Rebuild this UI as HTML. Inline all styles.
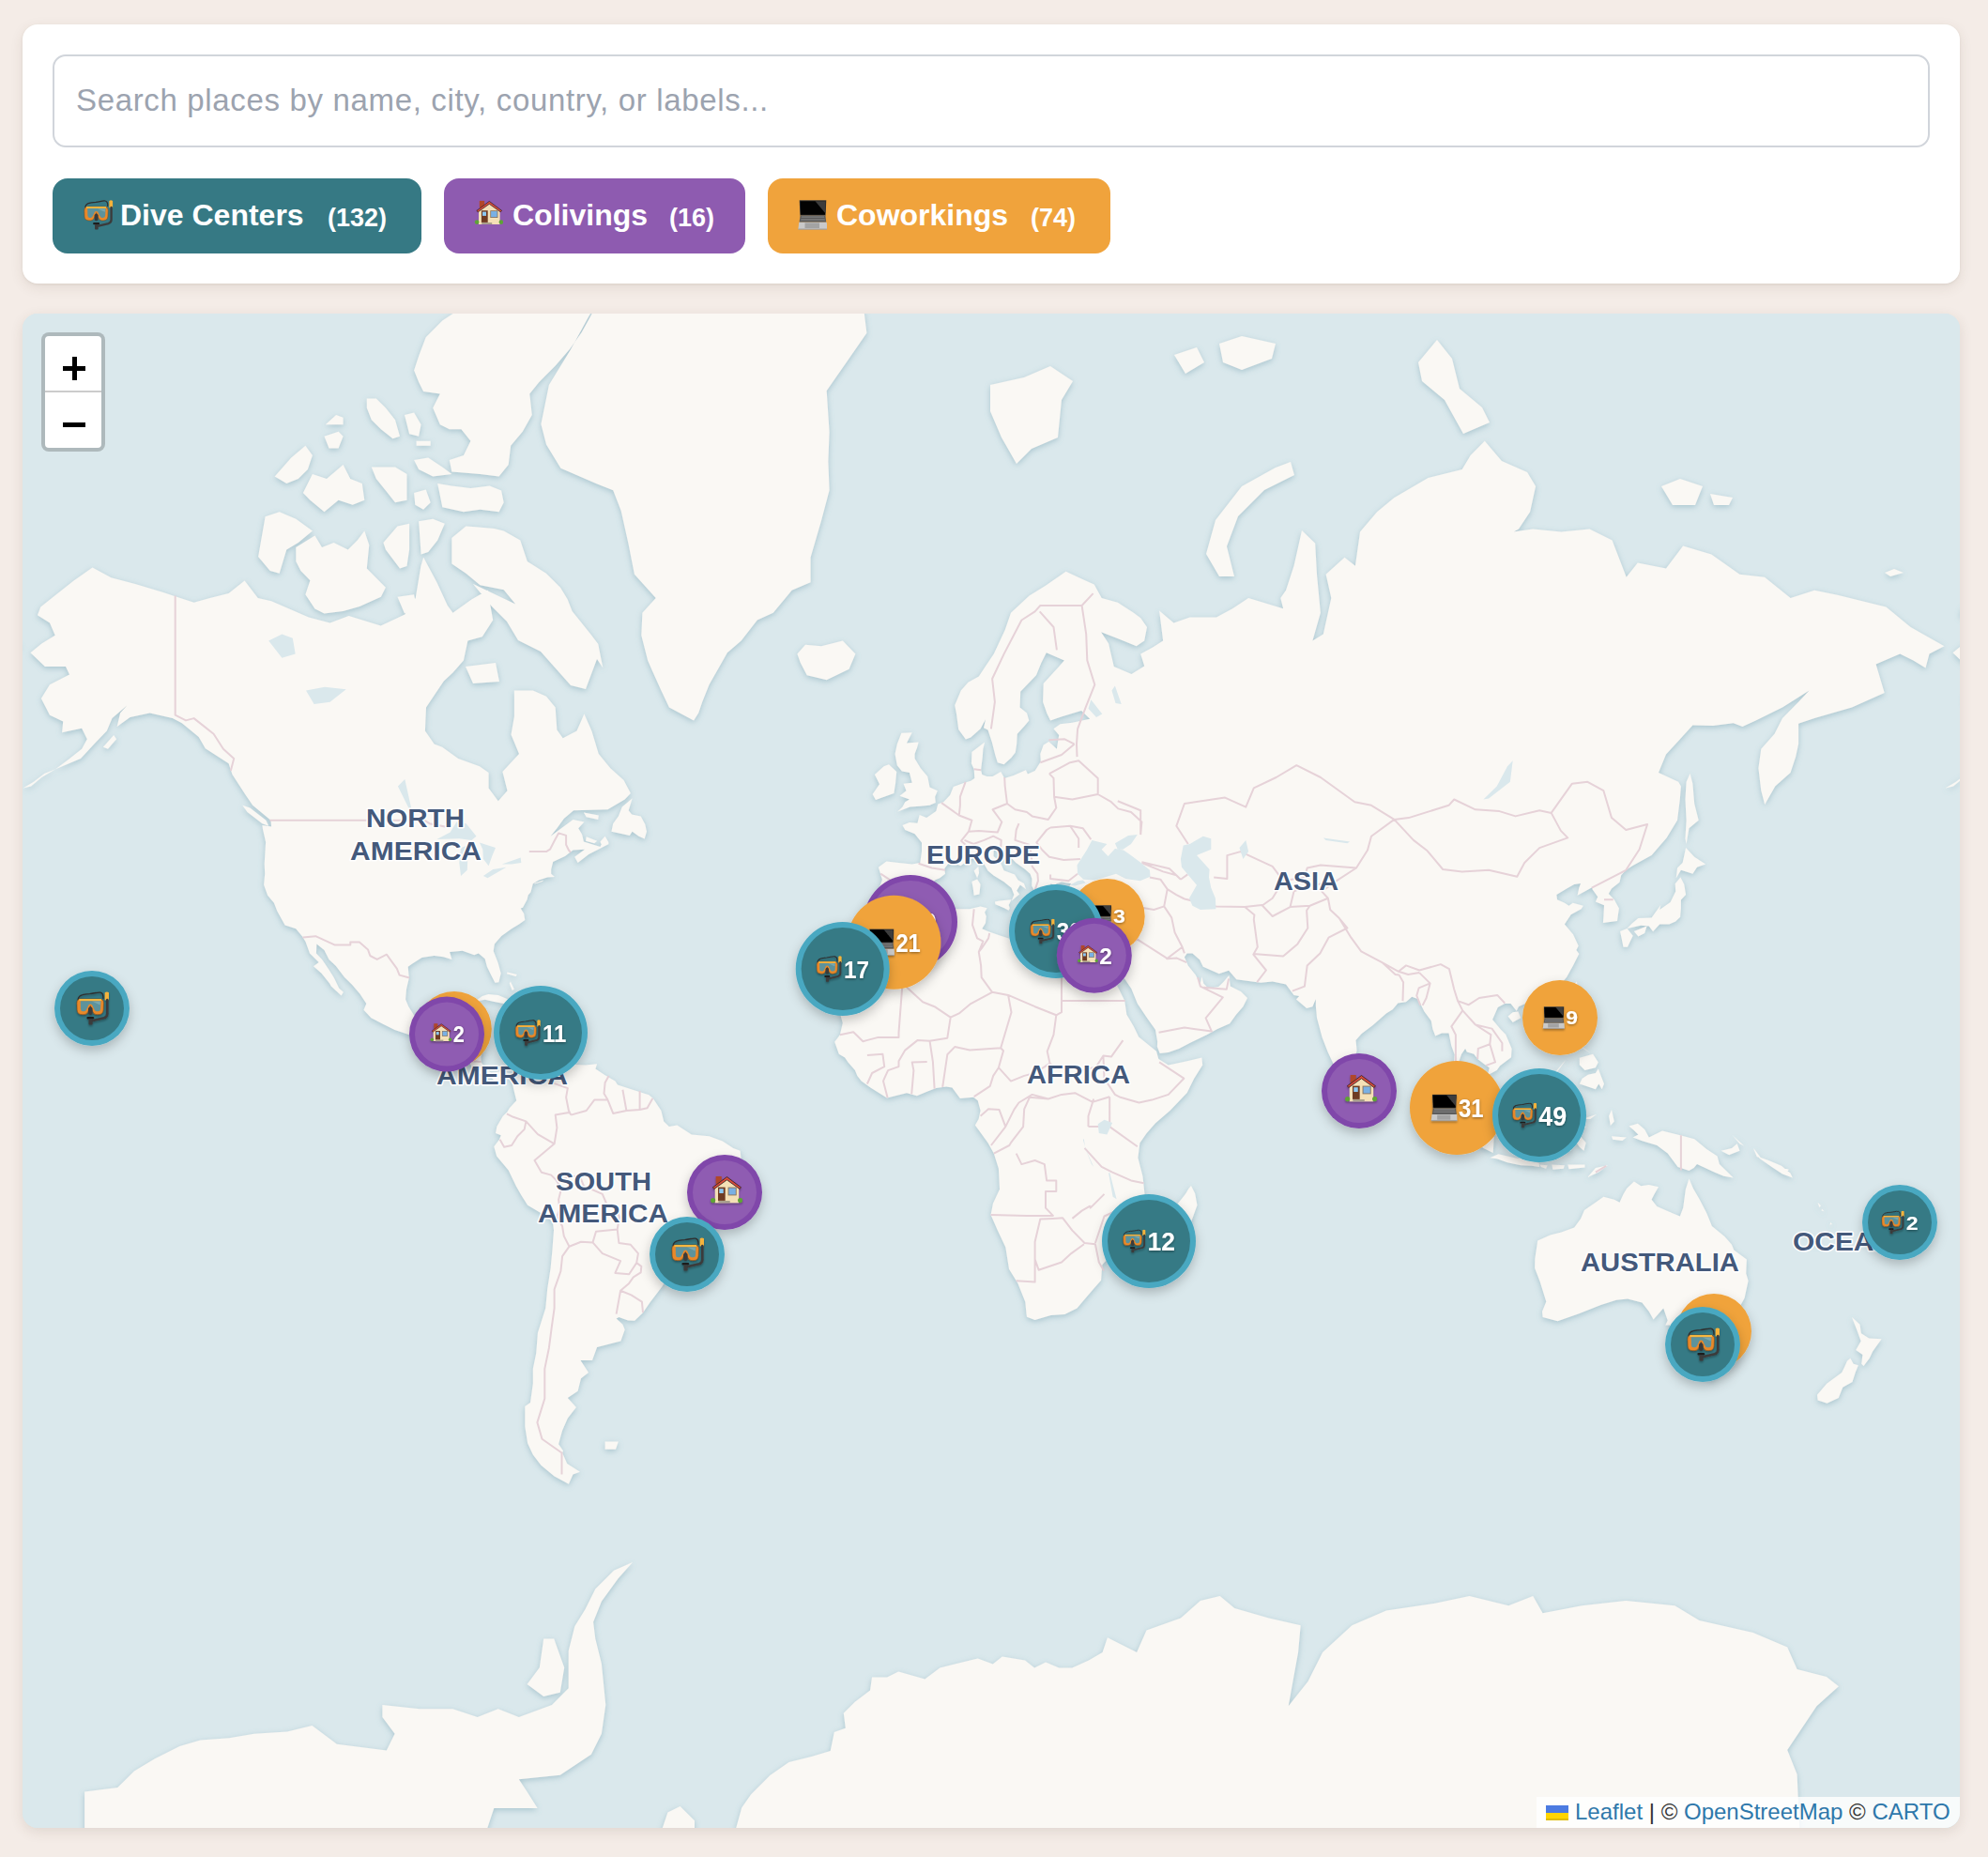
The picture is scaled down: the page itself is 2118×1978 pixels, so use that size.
<!DOCTYPE html>
<html><head><meta charset="utf-8">
<style>
html,body{margin:0;padding:0;}
body{width:2118px;height:1978px;background:#f4ece7;position:relative;overflow:hidden;font-family:"Liberation Sans",sans-serif;}
.card{position:absolute;left:24px;top:26px;width:2064px;height:276px;background:#fff;border-radius:16px;box-shadow:0 4px 14px rgba(80,60,40,0.10),0 1px 3px rgba(80,60,40,0.08);}
.search{position:absolute;left:32px;top:32px;width:1996px;height:95px;border:2px solid #d1d5db;border-radius:14px;box-sizing:content-box;}
.ph{position:absolute;left:23px;top:27px;font-size:33px;line-height:40px;color:#9ca3af;letter-spacing:0.66px;white-space:nowrap;}
.btn{position:absolute;top:164px;height:80px;border-radius:16px;color:#fff;}
.btn .t{position:absolute;top:19px;font-size:32px;line-height:40px;font-weight:bold;white-space:nowrap;}
.btn .c{position:absolute;top:22px;font-size:27px;line-height:40px;font-weight:bold;white-space:nowrap;}
.btn svg{position:absolute;top:23px;width:32px;height:32px;}
.mapc{position:absolute;left:24px;top:334px;width:2064px;height:1613px;border-radius:16px;overflow:hidden;box-shadow:0 4px 14px rgba(80,60,40,0.12);background:#dae8ec;}
.map{position:absolute;left:0;top:0;}
.mc{font-family:"Liberation Sans",sans-serif;font-weight:bold;fill:#fff;}
.lb{font-family:"Liberation Sans",sans-serif;font-weight:bold;font-size:27px;fill:#44597b;paint-order:stroke;stroke:#fff;stroke-width:3px;stroke-linejoin:round;}
.zoom{position:absolute;left:20px;top:20px;width:60px;height:119px;border:4px solid rgba(0,0,0,0.2);border-radius:8px;background:#fff;background-clip:padding-box;}
.zoom .dv{position:absolute;left:0;top:58px;width:60px;height:2px;background:#ccc;}
.zoom .hb{position:absolute;background:#000;}
.attr{position:absolute;right:0;bottom:0;height:33px;width:451px;background:rgba(255,255,255,0.8);font-size:24px;line-height:33px;color:#333;white-space:nowrap;}
.attr a{color:#2e78ab;text-decoration:none;}
</style></head><body>
<div class="card">
  <div class="search"><div class="ph">Search places by name, city, country, or labels...</div></div>
  <div class="btn" style="left:32px;width:393px;background:#367984;">
    <svg style="left:32.5px" viewBox="0 0 32 32"><use href="#i-mask"/></svg>
    <span class="t" style="left:72px">Dive Centers</span><span class="c" style="left:293px">(132)</span>
  </div>
  <div class="btn" style="left:449px;width:321px;background:#8e5bb0;">
    <svg style="left:31px" viewBox="0 0 32 32"><use href="#i-house"/></svg>
    <span class="t" style="left:73px">Colivings</span><span class="c" style="left:240px">(16)</span>
  </div>
  <div class="btn" style="left:794px;width:365px;background:#f0a33c;">
    <svg style="left:31px" viewBox="0 0 32 32"><use href="#i-laptop"/></svg>
    <span class="t" style="left:73px">Coworkings</span><span class="c" style="left:280px">(74)</span>
  </div>
</div>
<div class="mapc">
<svg class="map" width="2064" height="1613" viewBox="0 0 2064 1613" xmlns="http://www.w3.org/2000/svg">
<defs>
<filter id="lsh" x="-5%" y="-5%" width="110%" height="110%"><feDropShadow dx="0" dy="2" stdDeviation="3" flood-color="#6f9cac" flood-opacity="0.45"/></filter>
<filter id="msh" x="-50%" y="-50%" width="200%" height="200%"><feDropShadow dx="0" dy="5" stdDeviation="6" flood-color="#000" flood-opacity="0.22"/></filter>
<filter id="ish" x="-30%" y="-30%" width="160%" height="160%"><feDropShadow dx="0" dy="1.5" stdDeviation="1.2" flood-color="#000" flood-opacity="0.35"/></filter>
<filter id="tsh" x="-30%" y="-30%" width="160%" height="160%"><feDropShadow dx="0" dy="1" stdDeviation="1.5" flood-color="#000" flood-opacity="0.45"/></filter>
<symbol id="i-mask" viewBox="0 0 32 32">
<path d="M1.9,8.5 C1.6,3.5 7,2.6 13,2.3 C17,2 20,0.6 23,1 C25.6,1.6 26,4 25.7,7" fill="none" stroke="#2e2e2e" stroke-width="1.2"/>
<path d="M0.8,11 Q0.8,7.1 4.8,7.1 L22.2,7.1 Q26.2,7.1 26.2,11 L25.9,17.5 Q25.6,21.9 21.2,21.9 L19.4,21.9 Q16.9,21.9 15.8,19 L13.6,13.6 L11.4,19 Q10.3,21.9 7.8,21.9 L5.8,21.9 Q1.2,21.9 1,17.5 Z" fill="#e8892a" stroke="#7a4010" stroke-width="0.45"/>
<rect x="3" y="7.15" width="21" height="1.8" fill="#f7b940"/>
<path d="M4.2,9 L23.5,9 L23.2,16.6 Q23,18.9 20.8,18.9 L19.6,18.9 Q18,18.9 17.2,16.8 L15.2,12.6 Q13.6,11.2 12,12.6 L10,16.8 Q9.2,18.9 7.6,18.9 L6.6,18.9 Q4.5,18.9 4.4,16.6 Z" fill="#5d939c"/>
<path d="M15,9.4 L23,9.4 L22.8,12.8 Z" fill="#9cc3c8" opacity="0.45"/>
<path d="M11.6,16 Q13.6,13 15.6,16 L15.4,21.6 Q13.6,23 11.8,21.6 Z" fill="#3a3a3a"/>
<path d="M27.3,1 Q29.2,-0.3 31.1,1 L31.1,8.2 L27.3,8.2 Z" fill="#f6b33a"/>
<path d="M29.6,8 L29.6,21 Q29.6,24 26.5,25.1 L16,27.6" fill="none" stroke="#3b3b3b" stroke-width="2.3" stroke-linecap="round"/>
<rect x="10.1" y="24" width="7" height="2.2" rx="1" fill="#1d1d1d"/>
<rect x="12" y="26" width="3.7" height="5.6" rx="0.8" fill="#3b3b3b"/>
</symbol><symbol id="i-house" viewBox="0 0 32 32">
<path d="M6.8,0.9 L12.2,0.9 L12.2,8.2 L6.8,8.2 Z" fill="#b0472a"/>
<path d="M6,10.5 L17.3,3.2 L28.6,10.5 L28.6,26 L6,26 Z" fill="#f4e0b6"/>
<path d="M3.8,11.4 L17.3,1.4 L30.7,11.4 L29.2,12.8 L17.3,4.3 L5.3,12.8 Z" fill="#d84c3a" stroke="#2a2020" stroke-width="0.7" stroke-linejoin="round"/>
<rect x="8.9" y="11.2" width="6.8" height="12.7" fill="#6e3a22"/>
<rect x="10" y="12.6" width="4" height="4.3" fill="#8cc8f2"/>
<rect x="18.3" y="11.2" width="8.1" height="7.8" fill="#8c7258"/>
<rect x="19.1" y="12" width="6.5" height="6.2" fill="#79b0e4"/>
<rect x="9.2" y="24" width="11" height="2" fill="#a9a08c"/>
<circle cx="4.1" cy="23.6" r="2.3" fill="#5ea336"/>
<circle cx="29.9" cy="23.6" r="2.3" fill="#5ea336"/>
</symbol><symbol id="i-laptop" viewBox="0 0 32 32">
<path d="M2.7,0.3 L31.3,0.3 L30.6,16.4 L3.4,16.4 Z" fill="#3a3a3a"/>
<path d="M3.4,1.2 L30.6,1.2 L30,15.8 L4,15.8 Z" fill="#020202"/>
<path d="M19.5,1.2 L30.6,1.2 L30.2,14 Z" fill="#3c3c3c"/>
<path d="M3.6,16.2 L30.4,16.2 L31.2,23.8 L2.6,23.8 Z" fill="#5a5a5a"/>
<path d="M5,17.2 L29,17.2 L29.4,19 L4.6,19 Z M4.4,19.9 L29.6,19.9 L30,21.8 L4,21.8 Z" fill="#777"/>
<path d="M2.2,23.8 L31.8,23.8 L32.4,31.3 L1.4,31.3 Z" fill="#c9c9c9"/>
<rect x="8.5" y="24.4" width="15.5" height="5.6" fill="#a3a3a3"/>
<path d="M1.4,30.6 L32.4,30.6 L32.4,31.6 L1.4,31.6 Z" fill="#9a9a9a"/>
</symbol>
<g id="land"><path d="M8.5,361.2L20.4,351.4L34.7,342.8L29.0,329.5L15.9,321.2L19.3,312.6L37.5,298.1L54.6,284.6L74.5,270.6L94.4,281.2L120.0,288.0L148.4,296.4L162.7,301.3L182.6,307.8L199.6,303.0L219.6,298.1L236.6,284.6L250.8,303.0L265.1,306.2L304.9,323.5L327.6,329.5L347.6,321.9L381.7,332.5L407.3,320.4L418.7,303.0L424.4,268.8L427.2,259.8L441.4,286.3L452.8,311.0L458.5,318.8L478.4,304.6L495.5,294.7L501.2,326.5L489.8,344.3L474.4,348.6L469.9,369.4L458.5,382.6L448.8,391.6L430.0,419.6L428.9,444.6L438.6,458.6L447.1,461.7L464.2,474.1L486.9,482.2L496.6,489.1L496.6,505.4L506.8,519.3L516.5,508.2L511.4,488.1L529.0,469.0L520.5,448.4L523.9,428.9L523.9,401.6L543.8,401.6L558.0,407.7L567.7,419.6L569.4,443.5L575.7,452.2L590.5,444.6L598.4,426.6L606.4,444.6L613.8,469.0L626.3,484.2L640.5,496.9L647.9,511.0L641.7,517.5L623.5,528.3L587.1,529.2L576.8,538.0L569.4,548.3L562.6,556.7L586.5,538.9L598.4,541.5L592.2,548.3L596.2,555.1L597.9,562.5L615.5,567.9L620.6,556.7L624.6,565.0L603.3,575.9L591.6,585.0L588.2,578.7L599.0,570.7L586.5,571.5L578.0,577.9L565.2,583.9L563.2,592.0L563.2,596.7L566.9,600.1L559.2,600.5L550.1,603.5L543.8,607.3L541.5,616.2L538.7,619.5L537.6,624.2L533.0,632.8L530.7,633.5L534.2,639.2L535.3,645.9L529.0,650.4L521.1,655.2L510.3,663.0L502.9,671.4L501.7,679.1L506.6,691.5L509.7,702.7L507.4,712.2L503.4,712.8L498.9,704.0L494.9,695.7L492.6,687.2L485.8,681.4L481.2,683.3L468.7,678.7L460.8,679.4L455.1,680.0L457.4,687.9L448.2,685.3L438.6,684.0L425.5,685.9L415.3,692.4L410.7,695.7L411.8,707.8L409.0,719.7L408.1,730.5L411.3,738.2L418.1,749.1L427.8,755.4L441.4,752.7L449.7,745.1L450.5,738.8L458.5,736.0L469.3,734.5L468.2,741.2L462.5,753.3L463.0,759.3L461.3,769.4L475.6,768.8L491.8,774.1L488.4,791.6L488.6,797.4L492.6,803.2L499.4,809.0L510.3,807.0L524.5,810.7L521.6,819.3L519.4,813.0L512.5,809.3L508.0,817.6L504.6,819.3L499.4,813.6L491.5,812.4L479.5,804.4L476.1,797.4L470.4,790.5L466.5,784.6L458.5,782.9L448.2,780.5L439.7,776.4L423.2,767.3L415.8,769.4L396.5,763.1L383.4,756.6L371.4,750.3L363.5,741.8L366.3,735.1L359.5,724.7L351.0,714.7L343.0,707.1L333.9,695.0L326.5,687.9L321.4,678.1L313.4,671.4L312.9,681.4L319.1,687.9L326.2,698.5L331.6,707.1L337.3,718.8L341.9,722.8L339.6,726.5L328.8,716.6L327.1,713.4L318.5,702.7L310.0,695.3L315.7,691.1L306.0,681.4L301.5,669.1L298.1,663.4L291.2,655.2L279.6,651.4L271.3,636.4L267.9,627.8L261.1,619.8L257.1,608.4L258.2,596.7L257.7,586.2L259.1,562.9L256.0,549.2L255.4,544.9L265.1,546.6L264.5,539.7L245.2,523.8L237.8,512.9L223.5,491.1L219.6,479.2L194.8,463.3L187.7,451.1L169.8,436.2L159.8,431.1L135.6,425.4L114.6,430.0L100.7,440.1L104.1,425.4L111.5,417.2L95.5,431.1L89.8,444.6L77.3,457.5L62.0,474.1L35.2,485.2L48.9,475.1L63.1,463.8L68.8,453.2L63.1,441.8L42.1,446.2L43.2,434.5L29.0,427.7L19.9,410.1L29.0,395.3L50.0,384.5L46.0,376.0L23.9,376.0ZM262.2,545.8L255.4,543.2L239.5,531.0L234.3,523.8L242.3,526.5L259.4,539.7ZM35.2,485.2L23.3,490.1L11.9,498.8L0.5,505.4L9.1,503.5L20.4,494.0ZM97.2,448.9L85.9,461.7L91.0,463.8L100.1,453.2ZM606.4,-2.7L583.6,39.0L560.9,76.0L552.4,117.8L558.0,139.5L573.4,164.8L612.1,181.4L629.2,188.3L637.7,210.3L645.4,244.7L651.9,277.7L674.7,303.0L660.4,318.8L659.3,342.8L666.1,369.4L670.7,380.0L680.4,401.6L688.9,419.6L715.1,433.4L720.2,425.4L724.2,413.7L731.6,395.3L750.9,361.2L765.7,348.6L782.8,326.5L799.8,318.8L819.7,294.7L839.6,286.3L839.6,259.8L851.0,220.8L859.6,188.3L858.4,157.4L859.6,126.1L856.7,82.3L879.5,49.5L899.4,20.7L896.5,-2.7ZM447.3,7.5L462.4,-2.5L608.2,-2.5L595.7,20.1L583.1,37.7L568.0,55.3L550.4,72.9L540.3,85.5L542.8,108.1L532.8,125.8L520.2,140.8L517.7,161.0L507.6,173.5L487.5,171.0L457.3,168.5L454.8,155.9L469.9,150.9L477.4,135.8L467.4,123.2L454.8,123.2L444.8,118.2L437.2,100.6L444.8,85.5L427.1,83.0L422.1,72.9L417.1,60.4L422.1,45.3L429.7,25.2ZM442.2,181.1L457.3,183.6L477.4,186.1L497.6,183.6L510.1,188.6L512.7,201.2L507.6,211.3L487.5,208.8L469.9,211.3L447.3,206.2ZM417.1,155.9L432.2,153.4L447.3,163.5L457.3,171.0L437.2,173.5L422.1,166.0ZM366.8,90.5L376.8,90.5L386.9,100.6L397.0,113.2L402.0,130.8L394.5,133.3L381.9,123.2L371.8,113.2L366.8,100.6ZM407.0,108.1L417.1,105.6L424.6,118.2L422.1,130.8L412.1,128.3ZM322.8,118.2L334.1,108.1L341.6,110.7L341.6,118.2ZM321.5,130.8L336.6,125.8L341.6,130.8L336.6,143.4L326.5,143.4ZM419.6,135.8L434.7,135.8L434.7,140.8L419.6,140.8ZM268.7,173.5L286.3,153.4L301.4,140.8L308.9,150.9L303.9,166.0L293.8,176.1L281.3,181.1ZM298.9,191.1L308.9,171.0L324.0,176.1L341.6,161.0L349.2,176.1L361.8,181.1L364.3,198.7L351.7,203.7L336.6,198.7L321.5,211.3L306.4,198.7ZM371.8,163.5L397.0,163.5L409.5,171.0L409.5,198.7L397.0,201.2L386.9,188.6L376.8,176.1ZM417.1,191.1L429.7,187.4L434.7,201.2L427.1,208.8L418.3,203.7ZM258.6,216.3L273.7,211.3L291.3,218.8L308.9,231.4L293.8,244.0L281.3,251.5L273.7,276.7L263.7,274.1L251.1,259.1ZM291.3,249.0L311.5,236.4L319.0,249.0L331.6,244.0L346.7,251.5L356.7,241.4L364.3,231.4L369.3,246.5L366.8,271.6L386.9,291.8L381.9,301.8L359.2,311.9L341.6,316.9L321.5,319.4L311.5,314.4L301.4,299.3L306.4,284.2L296.4,274.1L291.3,264.1ZM384.4,244.0L399.5,226.4L412.1,223.8L412.1,251.5L409.5,269.1L402.0,271.6L386.9,251.5ZM422.1,221.3L437.2,218.8L449.8,223.8L442.2,241.4L432.2,254.0L424.6,256.5ZM399.5,301.8L417.1,299.3L419.6,311.9L407.0,319.4ZM457.3,238.9L472.4,226.4L502.6,228.9L512.7,231.4L530.3,241.4L537.8,264.1L557.9,276.7L573.0,291.8L580.6,304.3L585.6,316.9L605.7,342.1L613.3,352.1L618.3,377.3L612.0,368.0L600.0,400.0L584.0,396.0L552.0,360.0L528.0,348.0L516.0,328.0L500.0,312.0L480.0,288.0L525.2,309.4L512.7,294.3L487.5,289.2L472.4,276.7L457.3,266.6ZM472.0,376.0L504.0,372.0L508.0,392.0L480.0,394.0ZM932.9,640.6L929.0,637.1L922.7,632.1L913.6,633.5L910.8,621.3L911.3,616.2L915.9,603.1L911.9,589.7L917.0,586.0L920.4,583.5L933.5,585.0L947.7,586.6L956.3,585.0L958.0,573.1L958.0,563.4L950.6,554.2L940.3,550.0L937.5,544.9L944.9,541.9L953.4,542.8L955.7,534.1L963.1,537.1L965.4,535.4L973.3,530.1L975.3,522.5L981.3,520.2L988.1,512.9L991.8,504.0L1003.5,499.7L1010.3,497.8L1014.3,494.9L1013.7,485.2L1010.9,479.2L1011.4,466.9L1025.1,456.4L1023.4,463.8L1022.8,472.6L1021.7,481.2L1021.1,486.2L1022.3,491.1L1027.4,493.0L1033.6,493.0L1042.2,488.1L1046.2,494.9L1055.8,492.0L1068.9,486.2L1070.9,490.6L1078.6,487.1L1084.8,477.2L1084.3,469.0L1087.7,459.6L1093.4,455.9L1101.9,463.8L1104.2,448.9L1098.5,442.3L1105.6,437.3L1118.4,435.7L1137.2,431.7L1128.1,423.1L1106.7,429.4L1095.1,433.4L1091.4,426.0L1087.1,413.7L1087.7,394.1L1104.2,376.0L1109.9,369.4L1090.8,361.2L1085.4,372.1L1080.0,385.2L1063.2,402.8L1062.6,419.6L1070.0,425.4L1072.3,433.4L1067.8,439.0L1059.8,447.8L1059.2,458.6L1057.8,467.5L1053.5,473.1L1045.6,480.2L1038.8,478.2L1036.5,471.1L1032.8,456.4L1028.5,443.5L1024.0,441.2L1026.0,432.3L1020.6,442.3L1010.3,451.6L1004.9,453.5L997.2,442.9L995.0,426.6L993.2,417.2L999.8,401.6L1007.5,392.8L1018.8,386.5L1025.7,376.0L1034.8,362.6L1046.7,337.0L1053.0,318.8L1072.6,300.5L1090.0,289.7L1111.6,274.7L1132.6,284.6L1141.7,288.5L1149.7,303.0L1166.8,307.8L1183.8,318.8L1191.2,324.2L1198.0,334.0L1195.2,348.6L1186.7,354.3L1169.6,347.2L1149.1,339.2L1157.1,351.4L1162.8,376.0L1181.5,383.9L1195.2,375.4L1191.2,362.6L1203.7,355.7L1215.1,348.6L1211.1,316.5L1226.5,329.5L1243.6,323.5L1272.0,323.5L1289.1,314.2L1306.1,303.0L1343.1,314.2L1340.3,303.0L1346.0,294.7L1354.5,268.8L1363.0,231.0L1377.2,244.7L1379.0,277.7L1382.9,318.8L1374.4,348.6L1385.8,341.4L1394.3,303.0L1388.6,277.7L1408.5,259.8L1419.9,268.8L1425.0,232.4L1443.1,211.3L1461.2,196.2L1497.5,175.1L1533.7,166.0L1542.7,150.9L1557.8,135.8L1575.9,156.9L1603.1,169.0L1612.1,184.1L1606.1,211.3L1594.0,229.4L1566.9,244.5L1588.0,232.4L1609.1,229.4L1639.3,232.4L1669.5,229.4L1693.6,241.5L1708.7,280.7L1720.8,265.6L1751.0,271.6L1769.1,247.5L1799.3,256.5L1829.4,277.7L1856.0,280.7L1883.6,303.0L1909.2,294.7L1933.6,299.7L1985.4,312.6L2011.6,334.0L2047.4,354.3L2031.5,362.6L2027.5,377.4L2014.4,369.4L2000.2,362.6L1974.6,373.4L1983.7,404.0L1949.0,419.6L1909.2,431.1L1892.1,436.8L1892.1,458.6L1889.2,472.1L1883.6,489.1L1867.3,503.5L1856.2,522.9L1852.3,508.2L1849.4,484.2L1852.3,463.8L1866.5,447.8L1875.0,431.1L1892.1,413.7L1903.5,401.6L1875.0,419.6L1846.6,433.4L1832.4,440.1L1822.7,436.2L1801.1,439.0L1779.4,438.5L1761.2,458.6L1751.0,469.5L1743.0,489.1L1764.1,498.8L1766.9,503.5L1765.8,517.5L1763.0,539.7L1751.6,558.4L1735.6,577.1L1715.2,588.2L1708.3,592.8L1703.2,598.2L1701.5,605.8L1693.0,612.5L1689.8,618.0L1695.8,624.2L1700.9,633.5L1699.0,646.9L1683.9,649.0L1684.4,642.0L1685.0,630.3L1675.9,626.4L1678.2,621.3L1672.5,613.2L1672.5,611.0L1664.5,615.4L1656.6,619.8L1658.3,611.7L1660.0,606.9L1653.2,608.0L1645.2,612.5L1634.4,619.1L1635.0,624.2L1642.9,627.8L1647.5,630.7L1651.7,627.8L1662.8,630.7L1660.6,634.3L1649.7,640.3L1642.9,650.4L1652.0,661.3L1657.7,673.4L1655.4,678.1L1658.3,682.0L1652.0,694.4L1645.2,706.8L1636.7,716.9L1628.7,723.7L1619.0,729.0L1614.5,730.2L1604.8,733.3L1594.0,738.2L1591.7,742.7L1585.5,735.1L1579.2,735.1L1571.8,739.1L1566.1,752.1L1574.6,762.2L1580.3,767.9L1586.6,782.9L1586.0,792.2L1574.1,801.2L1570.7,806.1L1561.0,811.3L1562.7,803.2L1557.6,799.8L1550.8,794.5L1546.2,788.7L1538.8,786.4L1537.1,782.9L1533.1,788.7L1529.1,800.3L1533.1,811.9L1537.1,819.3L1546.5,825.6L1553.0,834.8L1552.7,838.8L1555.9,846.2L1555.3,853.0L1546.5,847.9L1541.1,843.3L1537.1,837.6L1535.4,829.6L1532.0,823.3L1524.0,815.3L1524.6,806.1L1525.7,789.3L1522.3,780.0L1519.5,766.4L1512.1,766.4L1505.2,769.4L1502.4,762.2L1500.7,753.3L1493.3,743.3L1487.0,730.2L1480.2,727.7L1474.0,733.3L1465.4,734.5L1459.7,741.2L1452.9,745.4L1438.7,758.1L1426.7,767.0L1420.5,774.1L1421.6,785.2L1418.8,794.5L1419.1,801.5L1414.8,807.3L1406.0,814.3L1398.6,803.5L1390.6,786.4L1384.6,771.1L1379.0,750.3L1377.8,736.9L1377.8,730.2L1374.4,738.2L1368.1,740.0L1357.0,730.5L1360.2,727.1L1354.5,725.9L1346.0,714.4L1331.7,711.6L1319.2,712.8L1293.3,709.3L1285.1,699.8L1274.8,703.3L1257.8,695.7L1254.1,688.2L1246.4,681.4L1240.7,681.4L1237.9,685.6L1241.8,694.4L1249.8,704.6L1252.7,710.3L1254.4,714.7L1256.4,706.2L1258.3,713.4L1263.5,719.1L1274.3,716.9L1279.4,711.9L1285.4,704.9L1286.8,716.6L1298.2,722.2L1305.0,729.0L1300.4,738.2L1293.0,746.7L1286.2,756.3L1272.6,762.2L1261.8,768.2L1244.1,776.7L1232.2,782.9L1220.8,787.0L1211.7,788.1L1208.9,781.1L1209.1,775.3L1206.9,762.8L1198.0,750.3L1187.8,735.1L1181.3,719.1L1173.0,707.1L1167.9,698.5L1162.8,691.1L1163.9,684.6L1160.5,694.4L1159.9,695.0L1153.7,687.9L1150.0,681.7L1148.6,673.1L1155.4,674.1L1160.5,671.4L1162.5,667.4L1166.8,655.2L1168.5,644.1L1170.5,636.4L1161.6,635.0L1151.4,640.3L1144.0,636.4L1139.4,634.3L1132.6,638.5L1125.5,634.6L1119.5,630.0L1119.3,623.5L1113.8,615.4L1115.0,610.6L1117.3,607.3L1107.0,605.4L1101.3,607.3L1100.8,609.5L1095.4,607.3L1095.1,615.4L1101.3,624.2L1099.3,626.7L1096.8,630.0L1092.8,637.8L1088.2,635.0L1086.0,629.3L1084.8,624.2L1080.3,616.9L1078.0,614.7L1075.2,609.5L1075.4,602.0L1073.5,596.7L1067.8,591.7L1058.4,585.0L1050.1,576.3L1047.0,570.7L1043.9,573.9L1043.0,567.9L1034.8,569.5L1034.5,577.9L1041.6,584.2L1045.6,593.2L1057.0,597.4L1060.7,603.5L1066.9,606.9L1069.2,613.2L1062.9,608.4L1059.2,614.7L1062.1,618.4L1053.8,625.6L1056.4,619.1L1053.5,611.7L1047.9,607.3L1045.9,605.4L1034.5,598.6L1028.5,593.6L1023.4,584.6L1020.6,580.3L1015.4,577.9L1006.0,583.5L999.5,588.2L995.2,586.6L987.0,585.0L982.2,591.3L983.0,596.7L977.3,601.2L971.9,603.5L969.6,606.5L962.8,615.8L965.9,620.9L962.0,623.8L960.8,629.3L952.3,635.7L939.8,635.7ZM932.4,530.5L945.5,525.6L956.3,524.7L966.5,523.8L972.8,521.1L972.2,514.7L974.8,508.2L966.5,504.5L965.4,498.8L964.2,493.0L956.8,484.2L950.6,474.1L950.6,469.0L953.1,462.3L954.6,456.4L942.0,457.5L947.7,446.2L936.4,446.7L931.8,458.6L929.5,469.0L931.8,481.2L936.9,487.6L944.9,489.1L947.7,499.7L938.6,500.7L941.5,508.2L934.6,513.8L944.9,517.5L940.3,520.2L937.5,525.6ZM923.0,480.2L931.2,488.1L930.1,500.2L928.4,511.0L909.0,517.9L905.6,512.0L913.0,501.2L907.9,491.1L917.6,482.2ZM873.8,348.6L887.4,362.6L880.6,378.7L856.7,390.3L835.7,385.2L828.8,372.1L825.4,362.6L834.0,352.8L851.0,354.3ZM1053.5,624.2L1040.7,625.6L1035.9,626.4L1036.5,629.3L1045.9,633.2L1050.7,635.7L1051.8,633.2L1050.7,630.0ZM1017.1,602.4L1011.4,605.0L1012.6,611.7L1013.7,619.8L1019.4,618.4L1020.6,608.0ZM1018.3,588.9L1013.7,593.6L1017.1,601.2L1019.1,595.9ZM1099.1,643.4L1114.4,644.8L1109.9,647.6L1098.5,646.2ZM1148.6,646.6L1161.6,643.4L1152.5,650.4L1149.7,650.4ZM1031.0,76.0L1067.0,68.0L1095.0,56.0L1119.0,72.0L1107.0,92.0L1103.0,132.0L1075.0,144.0L1059.0,160.0L1043.0,132.0L1031.0,104.0ZM1351.0,158.0L1355.0,172.0L1323.0,188.0L1295.0,216.0L1283.0,248.0L1291.0,280.0L1275.0,280.0L1261.0,256.0L1271.0,220.0L1299.0,184.0L1335.0,164.0ZM1487.0,52.0L1507.0,28.0L1523.0,48.0L1531.0,80.0L1555.0,100.0L1563.0,116.0L1535.0,128.0L1515.0,92.0L1491.0,72.0ZM1227.0,44.0L1251.0,36.0L1259.0,52.0L1239.0,64.0ZM1275.0,32.0L1299.0,24.0L1335.0,32.0L1331.0,48.0L1299.0,60.0L1279.0,52.0ZM1746.0,184.0L1766.0,176.0L1790.0,184.0L1782.0,204.0L1758.0,204.0ZM1798.0,192.0L1822.0,196.0L1818.0,204.0L1802.0,204.0ZM1984.0,276.0L1994.0,272.0L2004.0,276.0L1990.0,280.0ZM1421.0,804.4L1427.3,811.9L1430.2,823.3L1423.3,826.5L1419.1,820.5L1419.3,811.9ZM1656.0,711.6L1656.6,719.7L1652.3,732.7L1648.0,725.9L1650.9,716.6ZM1593.4,743.6L1596.3,750.3L1587.7,755.1L1582.6,748.5L1587.7,744.2ZM1766.4,600.5L1770.3,608.0L1772.1,619.1L1766.9,624.6L1766.9,633.5L1766.1,642.7L1761.2,647.6L1754.4,650.4L1744.2,650.4L1737.1,658.3L1732.8,652.4L1724.3,651.8L1709.5,654.9L1714.6,649.7L1721.4,644.1L1735.6,643.4L1745.3,630.0L1744.2,635.0L1755.6,627.1L1761.2,615.4L1760.7,607.3ZM1709.5,654.9L1702.1,657.9L1705.5,674.8L1710.0,674.8L1715.7,662.7ZM1730.5,652.4L1728.2,660.0L1721.4,663.4L1716.9,657.9ZM1772.1,569.1L1781.2,578.7L1793.1,586.6L1784.0,589.7L1779.4,596.7L1766.9,592.8L1761.8,601.2L1763.0,590.5L1768.6,585.0ZM1776.6,490.1L1779.4,500.7L1781.2,522.0L1785.7,539.7L1775.5,548.3L1772.6,565.0L1771.5,559.2L1772.6,539.7L1771.5,517.5L1772.6,498.8ZM1507.0,828.8L1519.5,830.8L1526.3,839.9L1536.5,849.0L1550.8,854.7L1555.3,860.4L1559.3,868.9L1567.8,877.5L1566.7,894.0L1556.4,888.9L1546.5,882.0L1535.7,865.8L1526.9,850.4L1513.8,840.5ZM1563.3,899.2L1572.4,895.2L1582.0,897.5L1592.9,900.0L1599.1,899.2L1605.9,901.5L1615.6,904.9L1616.2,908.9L1607.6,907.8L1596.3,907.2L1582.0,904.3L1570.7,900.3ZM1616.2,906.6L1624.7,907.2L1623.0,910.7L1617.9,908.9ZM1629.3,906.6L1642.9,907.2L1641.8,910.7L1630.4,911.8ZM1646.3,906.6L1664.5,906.6L1664.5,909.5L1647.5,911.2ZM1689.0,907.2L1675.9,910.1L1667.4,919.9L1678.8,914.7ZM1629.3,820.5L1625.0,826.5L1618.5,832.5L1607.6,842.2L1597.4,849.0L1592.6,851.6L1588.3,849.0L1586.6,860.4L1590.6,871.8L1599.1,877.5L1616.7,880.3L1624.7,883.2L1629.5,867.5L1641.2,854.7L1636.1,849.0L1635.5,836.2L1642.9,831.9L1636.7,827.1L1634.4,821.1ZM1677.0,853.0L1664.5,857.0L1650.3,855.3L1646.6,865.5L1640.6,880.3L1644.6,892.3L1649.7,891.7L1650.3,876.3L1658.8,887.7L1663.4,891.7L1665.7,883.2L1656.0,871.8L1666.2,866.1L1656.0,863.2L1653.2,858.1L1670.2,858.1ZM1693.0,847.9L1695.8,860.4L1691.8,865.0L1690.1,854.7ZM1693.0,876.3L1708.9,877.5L1704.4,880.9L1694.1,879.8ZM1711.5,865.5L1720.9,862.7L1728.2,868.9L1732.8,877.5L1747.0,870.6L1765.2,874.9L1781.2,879.2L1794.2,890.0L1805.6,897.5L1807.9,906.1L1822.7,920.5L1812.4,918.7L1802.2,914.4L1784.0,906.1L1780.6,910.1L1775.5,913.0L1763.5,908.9L1752.7,894.6L1741.3,886.0L1725.4,881.2L1715.7,877.5L1721.4,874.6L1715.7,868.9ZM1826.7,884.3L1829.5,891.7L1818.1,896.3L1809.6,891.7L1821.0,888.9ZM1652.6,753.3L1660.0,753.3L1657.7,768.2L1658.8,780.0L1670.8,788.1L1664.5,782.9L1652.9,776.4L1647.5,767.0L1649.7,759.3ZM1678.8,804.4L1685.0,820.5L1682.7,826.2L1679.3,820.5L1675.9,826.2L1658.8,820.5L1661.7,814.7L1667.9,810.7L1675.9,809.0ZM1673.1,788.7L1678.8,797.4L1675.9,803.2L1664.5,806.1L1658.8,800.3L1658.8,792.8ZM1644.6,794.5L1631.5,812.4L1630.4,811.3L1641.8,797.4ZM931.8,642.0L934.6,641.3L947.7,646.2L953.4,646.9L961.1,642.7L973.3,637.1L982.2,635.3L993.2,634.3L1008.9,634.3L1020.6,631.4L1027.7,633.2L1025.1,637.8L1026.8,642.0L1026.0,649.3L1022.3,655.2L1028.5,657.9L1039.9,662.0L1050.7,665.4L1058.7,674.8L1072.9,679.4L1078.6,671.4L1078.9,667.4L1090.0,662.0L1101.0,667.4L1109.9,671.4L1124.1,673.4L1134.9,673.4L1141.2,671.4L1148.6,673.1L1150.0,681.7L1154.8,694.4L1157.1,699.2L1168.5,720.3L1174.2,732.1L1176.4,746.7L1183.8,759.3L1189.2,770.5L1208.0,785.8L1210.3,794.0L1220.8,800.6L1240.7,796.3L1256.4,792.5L1257.2,800.6L1248.1,815.0L1240.7,829.9L1222.8,848.7L1206.9,862.4L1197.5,873.2L1190.4,883.5L1188.4,899.2L1193.5,919.0L1195.2,935.0L1196.3,944.1L1192.4,952.6L1174.7,963.9L1163.1,975.7L1165.6,985.7L1166.2,1000.2L1155.4,1007.4L1150.3,1013.3L1149.1,1029.7L1141.4,1038.5L1131.5,1050.0L1123.5,1059.5L1110.4,1065.9L1095.6,1067.0L1078.6,1072.0L1070.0,1068.7L1069.5,1065.6L1068.3,1052.7L1060.4,1032.9L1051.0,1017.8L1047.3,994.6L1038.8,976.6L1031.6,960.1L1033.9,947.9L1041.0,932.7L1039.9,910.7L1034.8,894.6L1028.5,883.2L1014.9,864.4L1018.6,858.1L1020.6,849.0L1017.7,838.2L1013.2,834.8L998.9,835.9L990.4,824.5L984.1,823.6L973.3,825.1L963.7,828.8L952.9,833.3L942.0,830.2L921.0,835.6L903.4,824.5L893.7,817.6L889.4,811.9L886.9,806.1L879.5,797.4L876.1,792.5L869.8,788.7L865.2,775.8L870.9,768.2L873.8,755.7L871.5,747.3L867.8,739.4L874.1,721.6L882.3,706.5L891.4,694.7L901.1,689.8L910.2,678.7L909.0,671.4L912.5,664.7L921.6,657.2L925.8,654.5ZM1245.0,928.9L1249.2,937.3L1251.5,949.7L1245.8,965.4L1237.9,985.7L1232.2,1007.4L1221.7,1011.1L1213.4,1006.1L1213.1,997.1L1211.7,985.7L1216.8,978.4L1215.1,964.5L1218.0,953.8L1228.2,950.9L1236.7,940.8L1239.6,936.8L1242.4,932.1ZM524.5,810.7L532.4,806.7L535.0,800.9L539.3,797.4L542.7,796.0L550.6,794.5L557.2,789.0L555.8,794.0L557.5,797.4L564.9,794.5L566.6,790.5L568.9,795.1L576.8,798.0L584.2,799.8L599.6,800.6L612.1,799.2L610.4,804.4L620.6,811.3L631.4,817.6L634.0,821.6L650.8,827.1L667.3,832.2L671.8,835.9L680.4,849.0L683.2,860.4L688.9,866.1L697.4,864.4L712.8,874.6L731.6,876.3L745.8,881.5L757.2,888.9L764.6,891.7L766.3,906.3L761.7,915.6L754.3,923.4L745.8,934.7L742.9,945.5L741.8,962.7L735.5,978.4L731.6,987.5L725.9,994.3L717.3,994.9L706.0,999.2L701.4,1001.1L688.9,1010.5L688.9,1023.9L681.5,1036.2L668.4,1053.4L661.0,1064.2L652.2,1072.8L645.1,1072.5L635.4,1069.0L632.6,1070.4L639.4,1076.7L641.7,1082.3L637.4,1094.4L612.1,1101.0L607.0,1115.0L594.5,1115.0L603.0,1128.0L595.0,1134.2L591.6,1147.7L580.8,1155.0L589.9,1164.9L580.8,1176.8L575.1,1189.8L571.1,1204.2L576.0,1211.2L575.1,1213.5L580.2,1224.9L593.9,1233.7L586.5,1236.6L581.9,1246.7L566.6,1238.6L552.4,1226.8L543.8,1215.4L538.1,1203.3L535.3,1185.4L535.3,1164.1L541.0,1159.9L543.8,1139.7L543.8,1124.1L547.2,1107.6L548.9,1085.8L557.2,1059.5L559.2,1038.8L562.6,1016.8L564.3,998.9L566.0,976.6L564.9,967.5L558.9,962.1L538.1,949.7L531.3,939.1L525.9,929.5L517.7,912.4L505.1,897.5L502.3,887.2L508.0,879.8L509.7,875.2L504.0,872.9L505.4,865.8L511.7,855.0L516.5,850.2L518.8,846.2L526.2,838.2L523.9,829.1L521.6,819.3ZM620.6,1201.5L634.8,1201.5L632.0,1209.8L620.6,1209.8ZM481.5,733.0L489.8,727.1L496.3,725.0L506.8,725.9L521.1,732.1L532.4,738.2L543.0,743.0L535.3,744.8L523.3,744.8L519.9,740.0L512.5,735.1L501.2,732.7L492.6,730.8ZM555.2,744.8L566.6,746.1L576.2,753.0L563.7,755.1L558.6,758.7L552.4,755.1L541.3,753.3L549.5,747.3ZM519.4,753.3L530.7,753.3L527.3,756.9L519.4,755.1ZM582.5,753.3L591.6,753.9L589.9,756.3L582.5,756.3ZM1775.5,921.6L1780.0,932.1L1786.8,943.8L1794.2,958.0L1799.9,972.0L1813.6,983.2L1821.0,991.8L1823.3,997.4L1836.9,1007.4L1836.3,1022.6L1838.6,1030.3L1834.6,1048.7L1825.5,1065.3L1823.3,1069.0L1818.7,1080.2L1817.8,1090.8L1806.8,1093.0L1798.2,1099.5L1797.7,1102.4L1788.0,1096.6L1786.3,1095.9L1781.2,1100.6L1770.3,1097.0L1759.8,1088.7L1755.0,1077.4L1750.4,1077.4L1752.7,1072.5L1748.2,1059.5L1737.6,1071.5L1732.8,1062.9L1725.4,1053.4L1710.0,1049.4L1698.1,1050.7L1681.6,1056.1L1658.3,1065.3L1635.5,1073.2L1619.6,1069.0L1619.0,1062.9L1623.3,1052.4L1616.7,1031.3L1611.1,1016.8L1611.3,1006.7L1614.2,987.5L1627.6,981.4L1639.5,978.4L1653.2,973.5L1660.0,964.2L1664.0,955.0L1675.9,946.7L1684.4,940.8L1695.8,943.8L1701.5,946.7L1705.5,937.9L1709.2,931.8L1716.9,924.5L1724.3,929.2L1732.8,928.0L1743.0,930.3L1738.5,937.9L1735.6,943.8L1741.3,950.9L1758.4,958.6L1765.8,961.5L1769.2,952.6L1771.8,933.0ZM1788.0,1115.0L1808.5,1115.4L1808.5,1125.7L1800.5,1136.6L1790.8,1132.6L1788.6,1120.3ZM1949.0,1069.0L1957.5,1076.7L1958.9,1086.2L1967.2,1091.5L1980.6,1092.3L1971.2,1105.4L1967.8,1112.8L1961.5,1121.1L1959.2,1118.8L1960.4,1109.1L1953.2,1103.9L1958.6,1094.4L1954.7,1083.7ZM1947.3,1112.8L1950.7,1118.8L1955.8,1120.3L1953.0,1127.2L1949.5,1138.1L1939.3,1143.7L1934.8,1155.0L1922.5,1160.7L1912.6,1157.4L1912.0,1151.7L1922.2,1139.7L1938.2,1128.0L1941.0,1122.2L1943.9,1115.8ZM1897.8,977.8L1913.7,990.6L1912.0,992.4L1898.9,980.8ZM77.9,743.0L84.2,746.1L79.0,750.9L77.3,746.7ZM1980.3,953.8L1988.2,957.4L1980.3,961.5L1974.6,958.6ZM66.1,1631.7L66.1,1574.5L101.3,1570.0L119.0,1552.4L141.0,1539.2L167.4,1526.0L189.5,1519.4L220.3,1517.2L246.8,1512.8L282.0,1510.6L308.5,1503.9L334.9,1523.8L387.8,1530.4L396.6,1512.8L383.4,1495.1L383.4,1481.9L423.0,1486.3L458.3,1486.3L484.7,1495.1L506.7,1486.3L528.8,1495.1L564.0,1481.9L581.7,1464.3L581.7,1424.6L588.3,1398.2L599.3,1380.6L610.3,1358.5L630.1,1338.7L650.0,1329.9L634.5,1347.5L616.9,1371.8L608.1,1393.8L610.3,1411.4L616.9,1437.9L621.3,1481.9L616.9,1512.8L605.9,1534.8L572.8,1556.8L528.8,1561.2L537.6,1574.5L548.6,1592.1L502.3,1592.1L489.1,1631.7L680.8,1631.7L680.8,1615.9L687.4,1596.5L700.6,1589.9L716.0,1605.3L716.0,1631.7L760.1,1627.6L760.1,1613.5L766.2,1591.4L776.2,1577.3L796.4,1557.1L816.5,1543.1L840.6,1537.0L860.7,1531.0L864.8,1510.9L876.8,1506.8L874.8,1490.7L886.9,1478.7L903.0,1466.6L905.0,1452.5L921.1,1452.5L933.2,1446.5L961.4,1454.5L977.4,1442.5L1017.7,1432.4L1033.8,1438.4L1043.8,1430.4L1068.0,1434.4L1078.1,1442.5L1090.1,1436.4L1104.2,1442.5L1118.3,1442.5L1136.0,1434.4L1150.6,1425.9L1155.9,1410.2L1187.1,1425.9L1197.5,1402.4L1234.0,1389.4L1254.9,1371.1L1275.7,1365.9L1291.3,1379.0L1327.8,1389.4L1361.7,1397.2L1359.1,1425.9L1348.7,1483.2L1369.5,1457.1L1385.1,1425.9L1416.4,1397.2L1452.9,1381.6L1505.0,1373.7L1541.5,1365.9L1583.2,1376.3L1609.2,1365.9L1619.6,1384.2L1661.3,1376.3L1708.2,1371.1L1760.3,1376.3L1786.4,1392.0L1843.7,1405.0L1880.2,1420.6L1890.6,1444.1L1921.9,1451.9L1934.9,1462.3L1911.5,1483.2L1890.6,1514.4L1880.2,1530.1L1890.6,1556.1L1895.8,1670.8L1036.0,1670.8ZM555.2,1411.4L566.2,1411.4L577.2,1442.3L572.8,1468.7L555.2,1473.1L537.6,1459.9L550.8,1442.3ZM649.6,516.6L645.7,529.2L649.1,533.6L658.7,535.4L663.3,544.0L665.0,551.7L662.7,559.6L656.5,556.7L649.6,551.7L646.8,555.9L627.4,551.7L629.2,543.2L634.8,535.4L638.8,525.6ZM597.9,531.4L613.8,534.5L613.2,538.9L600.7,536.2ZM600.7,557.2L612.1,561.7L609.2,564.2L600.1,561.7ZM620.6,556.7L624.6,563.4L617.8,568.3L615.5,562.5ZM555.2,603.5L544.4,607.3L546.7,607.3L553.5,605.0ZM516.5,701.4L526.8,704.0L525.6,705.9L515.9,703.3ZM519.9,711.6L523.9,719.7L521.6,720.9L518.8,713.4ZM1848.9,898.0L1860.2,902.0L1873.9,907.8L1883.6,915.8L1885.8,920.5L1875.0,916.4L1863.6,908.9L1851.1,900.3ZM1872.7,908.9L1881.8,911.8L1879.6,915.3L1872.7,913.0ZM1912.6,946.7L1916.0,950.3L1914.3,952.0ZM1917.1,953.8L1919.4,956.2L1916.6,955.6ZM1926.2,968.1L1927.9,969.9L1925.7,970.5ZM1844.3,888.9L1852.3,899.7L1847.7,898.0L1844.9,891.2ZM1821.0,874.6L1834.1,886.6L1829.5,884.3L1822.7,876.3Z" fill="#faf8f4"/></g>
</defs>
<rect width="2064" height="1613" fill="#dae8ec"/>
<g filter="url(#lsh)">
<use href="#land"/><use href="#land" x="2048"/><use href="#land" x="-2048"/>
</g>
<path d="M263.4,539.7L423.5,539.7L423.5,536.7L433.5,543.2L455.1,547.5M539.8,573.1L558.0,573.1L562.0,570.7L566.6,561.7L571.1,553.4L576.8,555.1L579.1,555.9L579.1,565.8L581.9,571.5L583.9,573.9M162.7,300.5L162.7,427.7L174.0,433.4L182.6,431.1L194.0,440.1L203.6,447.8L213.9,463.8L225.2,474.1L221.8,487.1M298.5,664.5L312.2,663.2L332.9,672.6L349.3,672.6L349.3,669.6L358.9,669.6L368.0,677.4L370.3,684.0L377.7,687.9L387.9,682.7L393.1,689.8L398.8,697.6L401.6,704.6L412.1,707.5M440.3,777.0L440.9,772.9L443.1,767.6L450.5,767.6L447.1,757.5L457.6,757.5L462.5,753.3M457.6,757.5L457.4,768.8M456.8,777.6L463.0,774.1L468.2,785.8M491.5,774.7L475.6,785.8L468.2,785.8M488.6,796.9L477.8,796.3M494.9,806.1L493.2,813.0M521.6,819.3L524.5,810.7M555.2,792.8L550.1,800.3L547.8,807.8L552.9,813.0L566.0,819.9L580.8,825.1L579.1,834.8L581.9,849.0L584.2,853.6M584.2,853.6L600.7,849.0L609.2,837.6L623.5,837.6L629.2,851.9L643.4,849.0L657.6,847.9L665.6,846.2L671.3,835.9M624.6,811.9L620.6,819.3L619.5,830.8L623.5,837.6M639.4,826.8L643.4,849.0M657.6,827.9L657.6,847.9M515.9,852.4L522.8,855.8L536.4,860.4L548.9,874.1L566.6,884.3L569.4,867.2L567.7,853.6L583.6,850.7M508.6,879.8L513.1,887.7L521.1,886.0L527.3,876.3L534.7,868.9L536.4,860.4M566.6,884.3L545.5,902.0L552.9,914.7L563.2,917.6L568.9,923.4L574.0,932.1L571.1,943.8L572.3,953.8L569.4,961.5L564.6,966.6M568.9,923.4L593.3,917.6L597.9,929.2L617.8,937.9L622.3,948.5L632.6,954.4L636.0,962.1L633.7,975.4L611.0,977.8L607.5,989.4L595.0,988.7L582.5,993.7L576.8,982.6L575.1,972.3L569.4,961.5M582.5,993.7L575.1,1004.2L573.4,1020.0L566.6,1039.4L566.6,1059.5L563.7,1080.2L560.9,1101.7L556.3,1124.1L556.3,1155.8L548.4,1181.1L553.5,1198.8L567.7,1208.8L574.5,1213.5L574.5,1236.6M607.5,989.4L617.8,1001.1L637.1,1009.2L631.4,1021.9L646.2,1023.2L654.2,1011.1L655.9,1001.1L647.9,991.8L635.4,990.0L633.7,975.4M654.2,1011.1L659.3,1014.9L658.7,1021.3L650.8,1026.4L646.2,1032.9L637.1,1040.8L648.5,1045.4L659.9,1052.7L661.0,1064.2M637.1,1040.8L632.6,1065.6M952.3,646.9L955.1,654.5L958.0,664.7L948.3,667.4L943.8,671.4L933.5,678.1L915.3,687.9L915.3,696.3L889.7,696.3M915.3,698.9L915.3,707.1L896.5,707.1L890.3,723.4L890.8,736.3L868.7,736.3M915.3,698.9L937.5,713.4L959.1,733.3L971.6,738.2L988.7,749.7L997.8,745.4L1010.3,735.1L1033.1,722.8L1021.7,707.1L1021.1,694.4L1018.8,680.0L1023.4,668.7L1017.1,665.4L1012.0,651.1L1013.7,634.3M1018.8,680.0L1022.8,674.8L1029.1,665.4L1030.2,660.0M937.5,713.4L933.5,765.8L933.5,771.1L910.8,771.1L899.4,774.1L895.4,775.3L885.2,765.2L870.9,768.2M1033.1,722.8L1050.1,725.9L1078.6,738.2L1101.3,747.3L1107.0,744.2L1107.0,732.1L1107.0,670.8M1107.0,732.1L1174.7,732.1M1101.3,747.3L1098.5,768.2L1091.7,785.8L1094.5,798.6L1078.6,809.0L1067.2,811.9L1053.0,817.6L1039.9,803.2L1045.0,785.2L1042.2,782.3L1053.5,744.2L1050.1,725.9M988.7,749.7L985.3,771.7L966.5,774.7L953.4,774.1L940.3,784.6L933.5,796.3L933.5,802.1L922.1,806.1L918.2,814.7L917.0,817.6L921.6,835.3M1042.2,782.3L1009.2,784.6L993.2,781.1L985.3,789.3L980.2,823.9M1045.0,785.2L1039.9,803.2L1034.2,811.9L1030.8,822.8L1013.7,834.2M966.5,774.7L969.9,796.9L971.6,825.6M963.7,796.9L947.7,797.4L949.4,806.1L947.2,831.3M899.9,789.9L916.4,788.7L918.2,802.1L905.1,809.0L899.9,820.5M1094.5,798.6L1101.3,804.4L1115.6,803.2L1129.8,806.1L1144.0,802.1L1151.4,790.5L1159.9,791.6L1172.4,774.1M1151.4,790.5L1152.5,814.7L1163.9,831.9L1169.6,834.8L1189.5,840.5L1203.2,837.6L1220.8,831.9L1237.3,814.7L1211.1,797.4M1158.2,834.2L1140.0,839.9L1121.2,830.2L1107.0,831.9L1092.8,836.5L1075.7,831.9L1061.5,840.5L1056.4,847.9L1047.3,866.1L1031.9,886.0M1047.3,866.1L1040.5,847.9L1029.1,847.3L1020.6,854.7M1092.8,836.5L1072.9,834.8L1067.2,847.3L1066.1,866.1L1053.0,883.2L1051.3,886.0L1034.8,894.6M1058.7,894.6L1064.4,906.1L1078.6,902.0L1088.8,906.1L1091.1,923.4L1101.3,923.4L1101.3,935.0L1090.0,935.0L1090.0,952.6L1097.9,960.9L1070.0,960.9L1031.6,960.1M1187.8,887.2L1158.2,866.1L1158.2,854.7L1158.2,834.2M1135.5,866.1L1158.2,866.1M1135.5,866.1L1135.5,854.7L1141.2,836.5M1194.6,926.3L1181.0,923.4L1161.1,914.7L1149.7,908.9L1131.5,888.9M1058.7,1030.3L1078.6,1031.6L1078.6,1006.1L1078.6,988.7L1084.3,964.5L1097.9,963.9L1108.2,963.3L1118.4,976.6L1131.5,990.0L1142.9,991.2L1146.8,1010.5L1152.0,1019.4M1078.6,1007.4L1082.6,1018.7L1107.0,1010.5L1117.3,1001.1L1130.9,991.2M1137.7,950.3L1128.6,955.6L1118.4,963.9M1165.0,955.6L1152.5,961.5L1142.9,990.0M1152.5,937.9L1137.7,952.6L1137.7,950.3M954.6,585.8L968.8,590.5L983.0,592.8M914.2,596.7L925.5,604.2L922.1,615.4L925.0,624.9L922.7,632.1M979.0,521.1L997.8,534.5L1011.4,539.7L1008.0,551.7L1000.1,561.7L1004.6,565.8L1008.6,580.3L1007.5,582.7M1004.6,498.8L998.9,514.7L998.9,523.8L997.8,534.5M1013.7,485.2L1021.1,486.2M1008.0,551.7L1018.8,550.9L1038.8,552.5L1043.3,541.5L1033.6,528.3L1049.0,522.0L1046.7,503.5L1046.2,494.0M1003.5,560.9L1013.2,565.0L1024.5,560.9L1034.2,556.7L1042.7,560.9L1042.2,569.1M1049.0,522.0L1057.5,528.3L1070.0,531.0L1075.7,535.4L1092.8,538.9L1101.3,526.5L1099.1,514.7L1098.5,494.9L1093.9,490.1M1061.5,543.2L1058.7,550.0L1057.5,560.9L1072.3,565.8L1074.6,574.7L1075.7,588.9L1081.4,596.7L1082.0,604.2L1078.6,614.0M1095.1,547.5L1091.1,550.0L1080.3,563.4L1086.5,571.5L1093.9,578.7L1109.3,581.9L1126.9,581.1M1116.1,545.8L1125.2,559.2L1125.2,569.1M1095.1,597.4L1095.1,602.0L1114.4,604.2L1124.1,596.7M1123.5,472.1L1123.0,458.6L1124.1,442.3M1084.3,478.2L1107.0,470.0L1120.7,458.6M1093.4,454.3L1109.9,453.2L1120.7,458.6M1093.9,490.1L1116.1,478.2L1125.2,476.2L1145.7,494.9L1145.7,512.0L1159.9,520.2L1167.3,527.4L1181.0,531.0L1192.4,541.5L1191.2,555.1M1099.1,514.7L1118.4,517.5L1145.7,512.0M1095.1,547.5L1116.1,545.8L1129.8,548.3L1138.3,560.1M1124.1,442.3L1132.6,419.6L1142.3,395.3L1134.3,369.4L1133.2,341.4L1128.6,311.0L1140.6,298.1M1031.9,442.3L1035.9,413.7L1033.1,389.0L1045.6,362.6L1064.4,326.5L1078.6,317.3L1084.3,311.0L1128.6,311.0M1101.9,358.4L1098.5,334.0L1083.7,317.3M1200.9,600.5L1212.3,602.7L1219.7,613.2L1216.2,631.4L1205.4,635.0L1192.4,632.8L1173.6,635.7M1192.4,585.0L1215.1,594.4L1229.3,598.2L1233.9,602.7M1219.7,613.2L1229.3,619.1L1237.9,623.5M1216.2,631.4L1224.2,643.4L1227.6,659.3L1235.6,674.8L1237.9,681.4M1192.4,632.8L1185.5,658.6L1174.2,666.1L1167.3,660.7M1185.5,658.6L1187.8,666.7L1175.3,671.4L1163.9,685.3M1235.6,674.8L1219.1,687.2L1229.9,686.6L1240.1,691.1M1219.1,686.6L1187.8,666.7M1252.1,707.1L1254.9,716.6L1278.8,728.4L1260.6,750.3L1266.9,764.6L1237.9,760.5L1210.6,765.8M1258.3,717.8L1282.8,719.7L1285.1,708.4M1237.9,623.5L1271.4,631.4L1302.2,632.1L1312.4,640.6L1311.8,645.5L1315.8,674.8L1311.3,682.7L1324.9,699.5L1315.2,712.2M1302.2,632.1L1320.4,630.0L1331.7,642.0L1350.5,632.1L1371.6,630.7L1390.9,622.8L1393.2,635.0L1402.8,644.1L1415.4,664.7L1426.2,679.4L1448.4,691.1L1466.0,700.8L1474.0,694.4L1488.2,699.5L1510.9,693.1L1520.0,698.2L1525.2,719.7L1529.1,732.1L1540.5,736.3L1551.9,729.0L1571.2,725.9L1579.2,734.5M1371.6,630.7L1368.1,635.7L1369.3,654.5L1358.5,671.4L1343.1,684.6L1311.3,682.0M1402.8,644.1L1411.4,654.5L1391.5,664.7L1382.4,681.4L1368.7,694.4L1365.9,716.6L1352.8,721.6M1448.4,691.1L1462.6,704.0L1466.6,704.6M1466.0,700.8L1476.2,704.0L1488.2,702.1M1466.6,704.6L1471.1,712.2L1470.5,732.1M1488.2,702.1L1499.6,713.4L1495.6,729.0L1491.6,736.9M1499.6,713.4L1487.6,718.4L1485.3,726.5L1489.3,736.9M1529.1,732.1L1534.3,742.4L1547.9,757.5L1564.4,768.2L1563.3,778.2L1550.8,782.9L1550.2,794.0M1563.3,778.2L1569.0,797.4L1559.3,800.9M1547.9,757.5L1565.5,761.6L1576.4,777.0L1576.4,785.8M1534.3,742.4L1522.3,759.3L1526.9,768.2L1526.9,800.3M1233.9,602.7L1221.9,591.3L1192.4,584.2M1233.9,602.7L1241.3,597.4M1191.2,555.1L1191.2,529.2L1166.8,519.3M1241.8,565.0L1229.3,545.8L1237.9,522.0L1281.1,515.6L1303.3,525.6L1311.8,505.4L1335.7,494.0L1357.3,481.2L1382.9,494.0L1419.3,520.2L1437.0,523.8L1461.4,538.9L1476.8,537.1L1519.5,523.8L1525.2,517.5L1547.9,528.3L1573.5,530.1L1590.6,535.4L1616.2,529.2L1628.7,531.9L1650.9,500.7L1667.4,498.8L1684.4,508.2L1693.0,537.1L1708.3,550.0L1731.1,544.0L1722.6,570.7L1708.3,592.8M1461.4,538.9L1437.0,556.7L1433.0,571.5L1421.0,590.5L1400.0,604.2L1384.1,615.4L1390.9,622.8M1461.4,538.9L1481.9,560.9L1496.7,572.3L1513.2,592.0L1533.7,594.4L1562.1,592.8L1592.3,599.7L1600.2,585.0L1616.2,569.1L1646.3,558.4L1638.9,550.9L1628.7,531.9M1400.0,604.2L1368.7,610.2L1365.9,600.5L1368.7,590.5L1382.9,587.4L1421.0,590.5M1368.7,610.2L1354.5,615.4L1350.5,632.1M1365.9,600.5L1343.1,604.2L1331.7,588.9L1297.6,573.1L1283.4,577.1L1283.4,602.0L1269.2,600.5M1343.1,604.2L1331.7,622.8L1320.4,630.7M1708.3,592.8L1671.9,611.7M1685.0,624.2L1694.7,624.2M1635.5,836.5L1623.6,853.6L1613.3,854.7L1599.1,849.0L1590.6,854.7L1588.3,849.0M1766.9,875.2L1766.9,912.4M1687.3,907.8L1675.9,914.7" fill="none" stroke="#e6d2d8" stroke-width="2" stroke-linejoin="round"/>
<g transform="translate(2048,0)"><path d="M263.4,539.7L423.5,539.7L423.5,536.7L433.5,543.2L455.1,547.5M539.8,573.1L558.0,573.1L562.0,570.7L566.6,561.7L571.1,553.4L576.8,555.1L579.1,555.9L579.1,565.8L581.9,571.5L583.9,573.9M162.7,300.5L162.7,427.7L174.0,433.4L182.6,431.1L194.0,440.1L203.6,447.8L213.9,463.8L225.2,474.1L221.8,487.1M298.5,664.5L312.2,663.2L332.9,672.6L349.3,672.6L349.3,669.6L358.9,669.6L368.0,677.4L370.3,684.0L377.7,687.9L387.9,682.7L393.1,689.8L398.8,697.6L401.6,704.6L412.1,707.5M440.3,777.0L440.9,772.9L443.1,767.6L450.5,767.6L447.1,757.5L457.6,757.5L462.5,753.3M457.6,757.5L457.4,768.8M456.8,777.6L463.0,774.1L468.2,785.8M491.5,774.7L475.6,785.8L468.2,785.8M488.6,796.9L477.8,796.3M494.9,806.1L493.2,813.0M521.6,819.3L524.5,810.7M555.2,792.8L550.1,800.3L547.8,807.8L552.9,813.0L566.0,819.9L580.8,825.1L579.1,834.8L581.9,849.0L584.2,853.6M584.2,853.6L600.7,849.0L609.2,837.6L623.5,837.6L629.2,851.9L643.4,849.0L657.6,847.9L665.6,846.2L671.3,835.9M624.6,811.9L620.6,819.3L619.5,830.8L623.5,837.6M639.4,826.8L643.4,849.0M657.6,827.9L657.6,847.9M515.9,852.4L522.8,855.8L536.4,860.4L548.9,874.1L566.6,884.3L569.4,867.2L567.7,853.6L583.6,850.7M508.6,879.8L513.1,887.7L521.1,886.0L527.3,876.3L534.7,868.9L536.4,860.4M566.6,884.3L545.5,902.0L552.9,914.7L563.2,917.6L568.9,923.4L574.0,932.1L571.1,943.8L572.3,953.8L569.4,961.5L564.6,966.6M568.9,923.4L593.3,917.6L597.9,929.2L617.8,937.9L622.3,948.5L632.6,954.4L636.0,962.1L633.7,975.4L611.0,977.8L607.5,989.4L595.0,988.7L582.5,993.7L576.8,982.6L575.1,972.3L569.4,961.5M582.5,993.7L575.1,1004.2L573.4,1020.0L566.6,1039.4L566.6,1059.5L563.7,1080.2L560.9,1101.7L556.3,1124.1L556.3,1155.8L548.4,1181.1L553.5,1198.8L567.7,1208.8L574.5,1213.5L574.5,1236.6M607.5,989.4L617.8,1001.1L637.1,1009.2L631.4,1021.9L646.2,1023.2L654.2,1011.1L655.9,1001.1L647.9,991.8L635.4,990.0L633.7,975.4M654.2,1011.1L659.3,1014.9L658.7,1021.3L650.8,1026.4L646.2,1032.9L637.1,1040.8L648.5,1045.4L659.9,1052.7L661.0,1064.2M637.1,1040.8L632.6,1065.6M952.3,646.9L955.1,654.5L958.0,664.7L948.3,667.4L943.8,671.4L933.5,678.1L915.3,687.9L915.3,696.3L889.7,696.3M915.3,698.9L915.3,707.1L896.5,707.1L890.3,723.4L890.8,736.3L868.7,736.3M915.3,698.9L937.5,713.4L959.1,733.3L971.6,738.2L988.7,749.7L997.8,745.4L1010.3,735.1L1033.1,722.8L1021.7,707.1L1021.1,694.4L1018.8,680.0L1023.4,668.7L1017.1,665.4L1012.0,651.1L1013.7,634.3M1018.8,680.0L1022.8,674.8L1029.1,665.4L1030.2,660.0M937.5,713.4L933.5,765.8L933.5,771.1L910.8,771.1L899.4,774.1L895.4,775.3L885.2,765.2L870.9,768.2M1033.1,722.8L1050.1,725.9L1078.6,738.2L1101.3,747.3L1107.0,744.2L1107.0,732.1L1107.0,670.8M1107.0,732.1L1174.7,732.1M1101.3,747.3L1098.5,768.2L1091.7,785.8L1094.5,798.6L1078.6,809.0L1067.2,811.9L1053.0,817.6L1039.9,803.2L1045.0,785.2L1042.2,782.3L1053.5,744.2L1050.1,725.9M988.7,749.7L985.3,771.7L966.5,774.7L953.4,774.1L940.3,784.6L933.5,796.3L933.5,802.1L922.1,806.1L918.2,814.7L917.0,817.6L921.6,835.3M1042.2,782.3L1009.2,784.6L993.2,781.1L985.3,789.3L980.2,823.9M1045.0,785.2L1039.9,803.2L1034.2,811.9L1030.8,822.8L1013.7,834.2M966.5,774.7L969.9,796.9L971.6,825.6M963.7,796.9L947.7,797.4L949.4,806.1L947.2,831.3M899.9,789.9L916.4,788.7L918.2,802.1L905.1,809.0L899.9,820.5M1094.5,798.6L1101.3,804.4L1115.6,803.2L1129.8,806.1L1144.0,802.1L1151.4,790.5L1159.9,791.6L1172.4,774.1M1151.4,790.5L1152.5,814.7L1163.9,831.9L1169.6,834.8L1189.5,840.5L1203.2,837.6L1220.8,831.9L1237.3,814.7L1211.1,797.4M1158.2,834.2L1140.0,839.9L1121.2,830.2L1107.0,831.9L1092.8,836.5L1075.7,831.9L1061.5,840.5L1056.4,847.9L1047.3,866.1L1031.9,886.0M1047.3,866.1L1040.5,847.9L1029.1,847.3L1020.6,854.7M1092.8,836.5L1072.9,834.8L1067.2,847.3L1066.1,866.1L1053.0,883.2L1051.3,886.0L1034.8,894.6M1058.7,894.6L1064.4,906.1L1078.6,902.0L1088.8,906.1L1091.1,923.4L1101.3,923.4L1101.3,935.0L1090.0,935.0L1090.0,952.6L1097.9,960.9L1070.0,960.9L1031.6,960.1M1187.8,887.2L1158.2,866.1L1158.2,854.7L1158.2,834.2M1135.5,866.1L1158.2,866.1M1135.5,866.1L1135.5,854.7L1141.2,836.5M1194.6,926.3L1181.0,923.4L1161.1,914.7L1149.7,908.9L1131.5,888.9M1058.7,1030.3L1078.6,1031.6L1078.6,1006.1L1078.6,988.7L1084.3,964.5L1097.9,963.9L1108.2,963.3L1118.4,976.6L1131.5,990.0L1142.9,991.2L1146.8,1010.5L1152.0,1019.4M1078.6,1007.4L1082.6,1018.7L1107.0,1010.5L1117.3,1001.1L1130.9,991.2M1137.7,950.3L1128.6,955.6L1118.4,963.9M1165.0,955.6L1152.5,961.5L1142.9,990.0M1152.5,937.9L1137.7,952.6L1137.7,950.3M954.6,585.8L968.8,590.5L983.0,592.8M914.2,596.7L925.5,604.2L922.1,615.4L925.0,624.9L922.7,632.1M979.0,521.1L997.8,534.5L1011.4,539.7L1008.0,551.7L1000.1,561.7L1004.6,565.8L1008.6,580.3L1007.5,582.7M1004.6,498.8L998.9,514.7L998.9,523.8L997.8,534.5M1013.7,485.2L1021.1,486.2M1008.0,551.7L1018.8,550.9L1038.8,552.5L1043.3,541.5L1033.6,528.3L1049.0,522.0L1046.7,503.5L1046.2,494.0M1003.5,560.9L1013.2,565.0L1024.5,560.9L1034.2,556.7L1042.7,560.9L1042.2,569.1M1049.0,522.0L1057.5,528.3L1070.0,531.0L1075.7,535.4L1092.8,538.9L1101.3,526.5L1099.1,514.7L1098.5,494.9L1093.9,490.1M1061.5,543.2L1058.7,550.0L1057.5,560.9L1072.3,565.8L1074.6,574.7L1075.7,588.9L1081.4,596.7L1082.0,604.2L1078.6,614.0M1095.1,547.5L1091.1,550.0L1080.3,563.4L1086.5,571.5L1093.9,578.7L1109.3,581.9L1126.9,581.1M1116.1,545.8L1125.2,559.2L1125.2,569.1M1095.1,597.4L1095.1,602.0L1114.4,604.2L1124.1,596.7M1123.5,472.1L1123.0,458.6L1124.1,442.3M1084.3,478.2L1107.0,470.0L1120.7,458.6M1093.4,454.3L1109.9,453.2L1120.7,458.6M1093.9,490.1L1116.1,478.2L1125.2,476.2L1145.7,494.9L1145.7,512.0L1159.9,520.2L1167.3,527.4L1181.0,531.0L1192.4,541.5L1191.2,555.1M1099.1,514.7L1118.4,517.5L1145.7,512.0M1095.1,547.5L1116.1,545.8L1129.8,548.3L1138.3,560.1M1124.1,442.3L1132.6,419.6L1142.3,395.3L1134.3,369.4L1133.2,341.4L1128.6,311.0L1140.6,298.1M1031.9,442.3L1035.9,413.7L1033.1,389.0L1045.6,362.6L1064.4,326.5L1078.6,317.3L1084.3,311.0L1128.6,311.0M1101.9,358.4L1098.5,334.0L1083.7,317.3M1200.9,600.5L1212.3,602.7L1219.7,613.2L1216.2,631.4L1205.4,635.0L1192.4,632.8L1173.6,635.7M1192.4,585.0L1215.1,594.4L1229.3,598.2L1233.9,602.7M1219.7,613.2L1229.3,619.1L1237.9,623.5M1216.2,631.4L1224.2,643.4L1227.6,659.3L1235.6,674.8L1237.9,681.4M1192.4,632.8L1185.5,658.6L1174.2,666.1L1167.3,660.7M1185.5,658.6L1187.8,666.7L1175.3,671.4L1163.9,685.3M1235.6,674.8L1219.1,687.2L1229.9,686.6L1240.1,691.1M1219.1,686.6L1187.8,666.7M1252.1,707.1L1254.9,716.6L1278.8,728.4L1260.6,750.3L1266.9,764.6L1237.9,760.5L1210.6,765.8M1258.3,717.8L1282.8,719.7L1285.1,708.4M1237.9,623.5L1271.4,631.4L1302.2,632.1L1312.4,640.6L1311.8,645.5L1315.8,674.8L1311.3,682.7L1324.9,699.5L1315.2,712.2M1302.2,632.1L1320.4,630.0L1331.7,642.0L1350.5,632.1L1371.6,630.7L1390.9,622.8L1393.2,635.0L1402.8,644.1L1415.4,664.7L1426.2,679.4L1448.4,691.1L1466.0,700.8L1474.0,694.4L1488.2,699.5L1510.9,693.1L1520.0,698.2L1525.2,719.7L1529.1,732.1L1540.5,736.3L1551.9,729.0L1571.2,725.9L1579.2,734.5M1371.6,630.7L1368.1,635.7L1369.3,654.5L1358.5,671.4L1343.1,684.6L1311.3,682.0M1402.8,644.1L1411.4,654.5L1391.5,664.7L1382.4,681.4L1368.7,694.4L1365.9,716.6L1352.8,721.6M1448.4,691.1L1462.6,704.0L1466.6,704.6M1466.0,700.8L1476.2,704.0L1488.2,702.1M1466.6,704.6L1471.1,712.2L1470.5,732.1M1488.2,702.1L1499.6,713.4L1495.6,729.0L1491.6,736.9M1499.6,713.4L1487.6,718.4L1485.3,726.5L1489.3,736.9M1529.1,732.1L1534.3,742.4L1547.9,757.5L1564.4,768.2L1563.3,778.2L1550.8,782.9L1550.2,794.0M1563.3,778.2L1569.0,797.4L1559.3,800.9M1547.9,757.5L1565.5,761.6L1576.4,777.0L1576.4,785.8M1534.3,742.4L1522.3,759.3L1526.9,768.2L1526.9,800.3M1233.9,602.7L1221.9,591.3L1192.4,584.2M1233.9,602.7L1241.3,597.4M1191.2,555.1L1191.2,529.2L1166.8,519.3M1241.8,565.0L1229.3,545.8L1237.9,522.0L1281.1,515.6L1303.3,525.6L1311.8,505.4L1335.7,494.0L1357.3,481.2L1382.9,494.0L1419.3,520.2L1437.0,523.8L1461.4,538.9L1476.8,537.1L1519.5,523.8L1525.2,517.5L1547.9,528.3L1573.5,530.1L1590.6,535.4L1616.2,529.2L1628.7,531.9L1650.9,500.7L1667.4,498.8L1684.4,508.2L1693.0,537.1L1708.3,550.0L1731.1,544.0L1722.6,570.7L1708.3,592.8M1461.4,538.9L1437.0,556.7L1433.0,571.5L1421.0,590.5L1400.0,604.2L1384.1,615.4L1390.9,622.8M1461.4,538.9L1481.9,560.9L1496.7,572.3L1513.2,592.0L1533.7,594.4L1562.1,592.8L1592.3,599.7L1600.2,585.0L1616.2,569.1L1646.3,558.4L1638.9,550.9L1628.7,531.9M1400.0,604.2L1368.7,610.2L1365.9,600.5L1368.7,590.5L1382.9,587.4L1421.0,590.5M1368.7,610.2L1354.5,615.4L1350.5,632.1M1365.9,600.5L1343.1,604.2L1331.7,588.9L1297.6,573.1L1283.4,577.1L1283.4,602.0L1269.2,600.5M1343.1,604.2L1331.7,622.8L1320.4,630.7M1708.3,592.8L1671.9,611.7M1685.0,624.2L1694.7,624.2M1635.5,836.5L1623.6,853.6L1613.3,854.7L1599.1,849.0L1590.6,854.7L1588.3,849.0M1766.9,875.2L1766.9,912.4M1687.3,907.8L1675.9,914.7" fill="none" stroke="#e6d2d8" stroke-width="2"/></g>
<path d="M1130.3,602.7L1142.9,603.5L1165.0,596.7L1175.3,602.0L1190.6,604.2L1201.5,599.7L1200.9,592.8L1190.6,584.2L1179.8,576.3L1173.0,571.5L1163.9,569.9L1156.5,577.9L1149.7,570.7L1155.4,565.0L1139.4,560.9L1133.8,571.5L1123.5,587.4L1124.1,596.7ZM1166.8,570.7L1163.9,564.2L1178.1,555.9L1187.8,555.1L1181.0,565.0L1172.4,570.7ZM1257.8,556.7L1243.6,565.0L1236.7,566.6L1233.9,581.1L1235.0,589.7L1251.0,608.8L1243.0,622.8L1246.4,630.7L1254.9,635.0L1271.4,634.3L1270.9,622.8L1266.3,611.7L1264.0,600.5L1264.6,592.0L1251.0,577.1L1266.3,570.7L1266.3,559.2ZM1116.1,608.8L1124.1,604.2L1129.8,603.5L1132.6,606.5L1121.2,609.5ZM441.4,560.1L455.6,552.5L462.5,541.5L472.7,543.2L483.5,556.7L478.4,560.9L465.3,559.2ZM478.4,565.0L467.0,569.1L465.3,585.0L467.0,598.9L473.8,592.8L474.4,577.1L482.4,566.6ZM486.9,563.4L504.0,569.1L500.6,577.1L496.6,588.2L490.9,581.1L490.3,570.7ZM515.4,589.7L495.5,601.2L490.9,598.9L501.2,592.0ZM510.8,586.6L530.7,579.5L531.3,585.0L521.1,586.6ZM407.3,495.9L414.1,526.5L411.3,526.5L399.9,503.5ZM1587.7,476.2L1584.9,498.8L1562.1,516.6L1556.4,517.5L1570.7,503.5L1582.0,482.2ZM1152.5,858.7L1161.1,862.1L1155.4,874.6L1146.8,872.9L1145.7,863.2ZM1130.9,879.2L1132.1,888.9L1141.2,908.9L1138.9,906.1L1133.2,891.7L1129.8,879.8ZM1158.2,914.7L1165.6,943.2L1161.6,940.8L1157.1,915.8ZM262.2,348.6L276.4,366.7L290.7,362.6L287.8,345.7L276.4,341.4ZM302.0,401.6L310.6,416.0L327.6,413.7L344.7,400.3L322.0,397.8ZM1138.3,411.3L1150.3,426.6L1144.0,430.0L1135.5,420.8ZM1163.9,396.6L1170.7,416.0L1164.5,414.9L1160.5,401.6ZM1303.3,560.9L1306.1,573.1L1300.4,581.1L1296.5,569.1ZM1385.8,558.4L1414.2,562.5L1411.4,564.2L1388.6,560.9Z" fill="#dae8ec"/>
<text x="366" y="547" class="lb" textLength="105" lengthAdjust="spacingAndGlyphs">NORTH</text><text x="349" y="582" class="lb" textLength="140" lengthAdjust="spacingAndGlyphs">AMERICA</text><text x="963" y="585.5" class="lb" textLength="121" lengthAdjust="spacingAndGlyphs">EUROPE</text><text x="1333" y="614" class="lb" textLength="69" lengthAdjust="spacingAndGlyphs">ASIA</text><text x="1070" y="820" class="lb" textLength="110" lengthAdjust="spacingAndGlyphs">AFRICA</text><text x="568" y="934" class="lb" textLength="102" lengthAdjust="spacingAndGlyphs">SOUTH</text><text x="549" y="968" class="lb" textLength="139" lengthAdjust="spacingAndGlyphs">AMERICA</text><text x="441" y="821" class="lb" textLength="140" lengthAdjust="spacingAndGlyphs">AMERICA</text><text x="1660" y="1020" class="lb" textLength="169" lengthAdjust="spacingAndGlyphs">AUSTRALIA</text><text x="1886" y="998" class="lb" textLength="138" lengthAdjust="spacingAndGlyphs">OCEANIA</text>
<circle cx="74.0" cy="740.0" r="40.0" fill="#4aa8c1" filter="url(#msh)"/><circle cx="74.0" cy="740.0" r="34.0" fill="#367a85"/><use href="#i-mask" x="57.0" y="722.0" width="36" height="36" filter="url(#ish)"/><circle cx="459.8" cy="762.0" r="40.0" fill="#f0a33b" filter="url(#msh)"/><use href="#i-laptop" x="441.1" y="750.0" width="24" height="24" filter="url(#ish)"/><text x="466.6" y="770.5" class="mc" style="font-size:23px" textLength="12" lengthAdjust="spacingAndGlyphs" filter="url(#tsh)">3</text><circle cx="452.0" cy="767.6" r="40.0" fill="#8046aa" filter="url(#msh)"/><circle cx="452.0" cy="767.6" r="34.0" fill="#8f5cb2"/><use href="#i-house" x="433.2" y="755.6" width="24" height="24" filter="url(#ish)"/><text x="458.7" y="776.1" class="mc" style="font-size:23px" textLength="12.1" lengthAdjust="spacingAndGlyphs" filter="url(#tsh)">2</text><circle cx="552.0" cy="766.0" r="50.0" fill="#4aa8c1" filter="url(#msh)"/><circle cx="552.0" cy="766.0" r="44.0" fill="#367a85"/><use href="#i-mask" x="524.5" y="752.0" width="28" height="28" filter="url(#ish)"/><text x="554.0" y="775.8" class="mc" style="font-size:26.6px" textLength="25.4" lengthAdjust="spacingAndGlyphs" filter="url(#tsh)">11</text><circle cx="748.0" cy="936.0" r="40.0" fill="#8046aa" filter="url(#msh)"/><circle cx="748.0" cy="936.0" r="34.0" fill="#8f5cb2"/><use href="#i-house" x="731.0" y="918.0" width="36" height="36" filter="url(#ish)"/><circle cx="708.0" cy="1002.0" r="40.0" fill="#4aa8c1" filter="url(#msh)"/><circle cx="708.0" cy="1002.0" r="34.0" fill="#367a85"/><use href="#i-mask" x="691.0" y="984.0" width="36" height="36" filter="url(#ish)"/><circle cx="946.0" cy="648.0" r="50.0" fill="#8046aa" filter="url(#msh)"/><circle cx="946.0" cy="648.0" r="44.0" fill="#8f5cb2"/><use href="#i-house" x="918.2" y="634.0" width="28" height="28" filter="url(#ish)"/><text x="947.8" y="658.0" class="mc" style="font-size:27px" textLength="26" lengthAdjust="spacingAndGlyphs" filter="url(#tsh)">10</text><circle cx="928.4" cy="669.7" r="50.0" fill="#f0a33b" filter="url(#msh)"/><use href="#i-laptop" x="899.9" y="655.2" width="29" height="29" filter="url(#ish)"/><text x="930.4" y="680.1" class="mc" style="font-size:28px" textLength="26.4" lengthAdjust="spacingAndGlyphs" filter="url(#tsh)">21</text><circle cx="873.7" cy="698.0" r="50.0" fill="#4aa8c1" filter="url(#msh)"/><circle cx="873.7" cy="698.0" r="44.0" fill="#367a85"/><use href="#i-mask" x="845.4" y="684.0" width="28" height="28" filter="url(#ish)"/><text x="874.9" y="707.6" class="mc" style="font-size:26px" textLength="27.1" lengthAdjust="spacingAndGlyphs" filter="url(#tsh)">17</text><circle cx="1155.7" cy="642.0" r="40.0" fill="#f0a33b" filter="url(#msh)"/><use href="#i-laptop" x="1136.5" y="630.0" width="24" height="24" filter="url(#ish)"/><text x="1162.0" y="649.4" class="mc" style="font-size:20px" textLength="12.9" lengthAdjust="spacingAndGlyphs" filter="url(#tsh)">3</text><circle cx="1101.0" cy="658.0" r="50.0" fill="#4aa8c1" filter="url(#msh)"/><circle cx="1101.0" cy="658.0" r="44.0" fill="#367a85"/><use href="#i-mask" x="1073.2" y="644.5" width="27" height="27" filter="url(#ish)"/><text x="1101.8" y="668.0" class="mc" style="font-size:27px" textLength="27" lengthAdjust="spacingAndGlyphs" filter="url(#tsh)">32</text><circle cx="1141.8" cy="683.8" r="40.0" fill="#8046aa" filter="url(#msh)"/><circle cx="1141.8" cy="683.8" r="34.0" fill="#8f5cb2"/><use href="#i-house" x="1122.8" y="672.3" width="23" height="23" filter="url(#ish)"/><text x="1147.2" y="692.7" class="mc" style="font-size:24px" textLength="13.6" lengthAdjust="spacingAndGlyphs" filter="url(#tsh)">2</text><circle cx="1200.0" cy="988.0" r="50.0" fill="#4aa8c1" filter="url(#msh)"/><circle cx="1200.0" cy="988.0" r="44.0" fill="#367a85"/><use href="#i-mask" x="1172.0" y="975.5" width="25" height="25" filter="url(#ish)"/><text x="1198.5" y="998.4" class="mc" style="font-size:28px" textLength="29.5" lengthAdjust="spacingAndGlyphs" filter="url(#tsh)">12</text><circle cx="1424.0" cy="828.0" r="40.0" fill="#8046aa" filter="url(#msh)"/><circle cx="1424.0" cy="828.0" r="34.0" fill="#8f5cb2"/><use href="#i-house" x="1407.0" y="810.0" width="36" height="36" filter="url(#ish)"/><circle cx="1528.0" cy="846.0" r="50.0" fill="#f0a33b" filter="url(#msh)"/><use href="#i-laptop" x="1499.5" y="831.5" width="29" height="29" filter="url(#ish)"/><text x="1530.0" y="856.1" class="mc" style="font-size:27.4px" textLength="26.6" lengthAdjust="spacingAndGlyphs" filter="url(#tsh)">31</text><circle cx="1616.0" cy="854.0" r="50.0" fill="#4aa8c1" filter="url(#msh)"/><circle cx="1616.0" cy="854.0" r="44.0" fill="#367a85"/><use href="#i-mask" x="1586.8" y="840.5" width="27" height="27" filter="url(#ish)"/><text x="1615.3" y="864.7" class="mc" style="font-size:28.8px" textLength="29.8" lengthAdjust="spacingAndGlyphs" filter="url(#tsh)">49</text><circle cx="1638.0" cy="750.0" r="40.0" fill="#f0a33b" filter="url(#msh)"/><use href="#i-laptop" x="1618.8" y="738.0" width="24" height="24" filter="url(#ish)"/><text x="1644.3" y="757.4" class="mc" style="font-size:20px" textLength="12.8" lengthAdjust="spacingAndGlyphs" filter="url(#tsh)">9</text><circle cx="2000.0" cy="968.0" r="40.0" fill="#4aa8c1" filter="url(#msh)"/><circle cx="2000.0" cy="968.0" r="34.0" fill="#367a85"/><use href="#i-mask" x="1980.3" y="955.5" width="25" height="25" filter="url(#ish)"/><text x="2006.8" y="975.8" class="mc" style="font-size:21px" textLength="12.9" lengthAdjust="spacingAndGlyphs" filter="url(#tsh)">2</text><circle cx="1802.0" cy="1084.0" r="40.0" fill="#f0a33b" filter="url(#msh)"/><circle cx="1790.0" cy="1098.0" r="40.0" fill="#4aa8c1" filter="url(#msh)"/><circle cx="1790.0" cy="1098.0" r="34.0" fill="#367a85"/><use href="#i-mask" x="1773.0" y="1080.0" width="36" height="36" filter="url(#ish)"/>
</svg>
<div class="zoom">
  <div class="hb" style="left:19px;top:32px;width:24px;height:5px"></div>
  <div class="hb" style="left:28.5px;top:22px;width:5px;height:25px"></div>
  <div class="dv"></div>
  <div class="hb" style="left:19px;top:92px;width:24px;height:5px"></div>
</div>
<div class="attr"><svg style="position:absolute;left:10px;top:9px" width="24" height="16" viewBox="0 0 12 8"><path fill="#4C7BE1" d="M0 0h12v4H0z"/><path fill="#FFD500" d="M0 4h12v3H0z"/><path fill="#E0BC00" d="M0 7h12v1H0z"/></svg><span style="position:absolute;left:41px;top:-1px"><a>Leaflet</a> | © <a>OpenStreetMap</a> © <a>CARTO</a></span></div>
</div>
</body></html>
